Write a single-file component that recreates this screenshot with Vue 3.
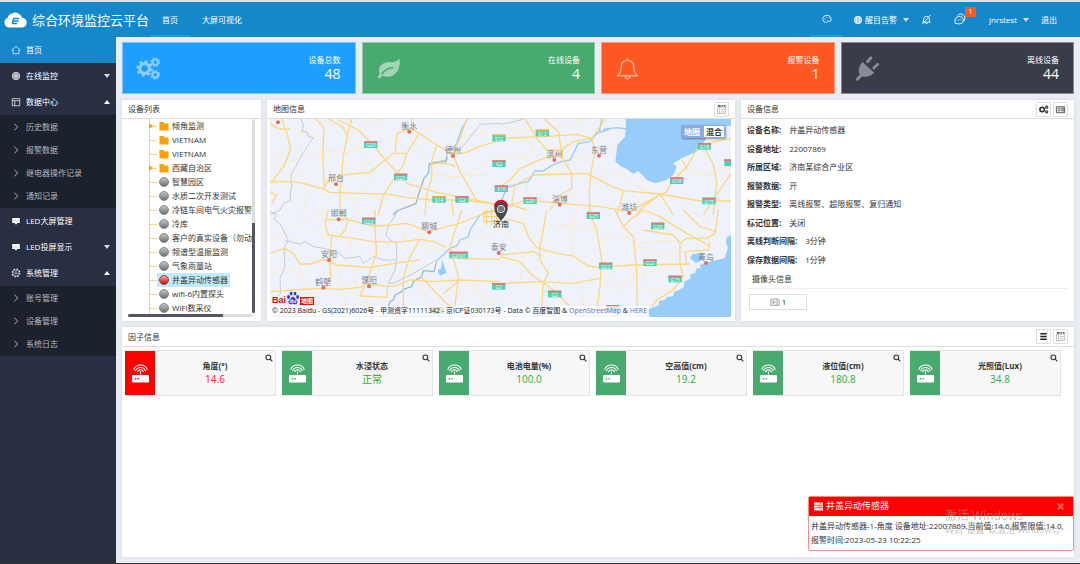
<script setup>
const menu = [
  { label: '首页', icon: 'home', active: true },
  { label: '在线监控', icon: 'globe', arrow: 'down' },
  { label: '数据中心', icon: 'table', arrow: 'up', children: ['历史数据', '报警数据', '继电器操作记录', '通知记录'] },
  { label: 'LED大屏管理', icon: 'screen' },
  { label: 'LED投屏显示', icon: 'screen', arrow: 'down' },
  { label: '系统管理', icon: 'gear', arrow: 'up', children: ['账号管理', '设备管理', '系统日志'] },
]

const stats = [
  { label: '设备总数', value: 48, tone: 'blue', icon: 'gears' },
  { label: '在线设备', value: 4, tone: 'green', icon: 'leaf' },
  { label: '报警设备', value: 1, tone: 'orange', icon: 'bell' },
  { label: '离线设备', value: 44, tone: 'dark', icon: 'plug' },
]

const tree = [
  { label: '倾角监测', folder: true, open: true },
  { label: 'VIETNAM', folder: true },
  { label: 'VIETNAM', folder: true },
  { label: '西藏自治区', folder: true, open: true },
  { label: '智慧园区' },
  { label: '水质二次开发测试' },
  { label: '冷链车间电气火灾报警' },
  { label: '冷库' },
  { label: '客户的真实设备（勿动）' },
  { label: '频谱型温振监测' },
  { label: '气象雨量站' },
  { label: '井盖异动传感器', selected: true },
  { label: 'wifi-6内置探头' },
  { label: 'WiFi数采仪' },
]

const info = [
  ['设备名称:', '井盖异动传感器'],
  ['设备地址:', '22007869'],
  ['所属区域:', '济南某综合产业区'],
  ['报警数据:', '开'],
  ['报警类型:', '离线报警、超限报警、复归通知'],
  ['标记位置:', '关闭'],
  ['离线判断间隔:', '3分钟'],
  ['保存数据间隔:', '1分钟'],
]

const factors = [
  { label: '角度(°)', value: '14.6', alarm: true },
  { label: '水浸状态', value: '正常' },
  { label: '电池电量(%)', value: '100.0' },
  { label: '空高值(cm)', value: '19.2' },
  { label: '液位值(cm)', value: '180.8' },
  { label: '光照值(Lux)', value: '34.8' },
]

const tiles = [
  {
    x: -30, y: -72,
    major: 'M66 72L85 130L92 165L70 215L40 255L30 262 M30 260L100 260L130 265L190 282L210 292L300 295L390 298L440 308L520 315L600 315L720 328 M168 72L192 98L188 180L193 280 M205 72L250 98L262 125L250 180L240 290L240 360 M275 72L262 120 M235 75L295 105L340 150L380 200L415 235L440 265L530 292L620 310L720 330 M455 72L455 100L530 150L580 178L620 172L650 158L720 135 M475 120L440 175L430 210L400 255L370 300L355 360 M190 280L205 255L245 240L330 232L400 175L437 175 M450 100L412 115L405 170 M620 72L600 130L580 180L600 230L640 300L655 325 M530 150L515 200L515 250L500 300L495 360 M515 207Q560 200 585 215 M30 290L50 300L35 325 M575 315L580 360 M30 85Q60 110 90 100',
    minor: 'M30 215L80 205L140 180L190 165L250 175L340 152 M140 300L130 360 M290 110L320 90L370 72 M300 295L330 250L300 160L260 125 M455 130L520 230L560 245L680 240 M600 130L680 110 M40 180L90 165 M120 110L190 130 M470 120L520 90L600 95 M620 240L690 190L720 180 M90 230L140 250L150 270 M400 255L460 300L470 360 M240 290L290 330L300 360 M505 240L600 245',
    border: 'M122 72L130 90L126 108L142 112L145 125L160 128L148 145L130 172L120 190L108 214L95 235L92 255L96 270L90 300L92 318L70 325L60 345L30 360 M720 85L660 88L640 115L600 165L575 155L560 165L562 195L540 198',
    river: 'M622 72L606 100L590 145L575 165',
    canal: 'M560 185L558 200L525 202L508 207L505 235L492 250L475 300L468 325L445 335L430 340L410 348L400 360',
  },
  {
    x: 690, y: -72,
    major: 'M133 72L175 110L188 190L215 235L215 280L180 300L150 345 M0 130L130 125L230 118L275 130 M315 72L290 110L275 130L220 140L190 160L187 180L130 190L60 220L30 255L0 275 M75 72L110 130L140 165L190 165 M275 130L285 165L272 240L268 290L270 360 M45 270L100 240L260 235L330 272L370 287L480 297L600 318L693 318 M693 130L605 148L590 165L560 215L515 260L500 290L470 305L430 335L410 355 M370 287L360 330L350 360 M612 155L640 210L650 260L640 360 M693 235L650 300L610 360 M480 297L520 360 M45 270L35 330L80 345 M0 340L80 315L180 325L300 335L390 350L470 305 M545 195L565 225',
    minor: 'M0 90L60 110L100 160L70 200 M60 110L190 95L260 72 M200 240L210 190L270 180 M285 165L340 155 M290 250L345 230L440 290 M550 230L640 240L693 210 M400 290L440 360 M530 300L560 360 M80 245L90 360 M210 290L260 340 M0 190L70 180L105 225',
    border: 'M0 88L35 82L72 72',
    river: 'M330 102L290 115L270 140L235 145L210 195L175 202L150 215L130 228L105 228L85 260L60 265L20 278L0 330 M305 72L298 112 M310 103L350 98L380 102L405 122',
    sea: 'M377 72L378 100L375 125L352 150L346 200L365 215L380 222L400 237L415 228L432 245L440 255L465 265L500 255L520 240L530 215L520 205L545 190L590 170L620 130L600 118L610 95L693 92L693 72Z',
  },
  {
    x: -30, y: 273,
    major: 'M205 0L195 40L205 75L280 85L340 95L430 95L480 88L520 95L560 112 M30 130L75 115L100 130L120 162L150 162L190 148L230 165L330 172L420 158L480 150 M215 75L210 150L212 200L195 235 M345 0L345 60L350 130L325 200L300 260 M240 0L265 30L255 60L240 78 M200 30L260 28L340 48L400 45L440 40L505 65L560 50L600 40L660 15L720 -5 M190 235L240 238L300 232L320 222L400 230L450 210L520 215L600 210L720 215 M480 88L450 140L430 200L430 300 M605 0L570 110L595 200L585 290 M480 195L520 240L570 290 M595 145L720 148 M30 245L100 240L190 235 M383 230L380 262L305 258 M550 250L600 210',
    minor: 'M30 190L100 175L140 220L170 290 M150 60L205 75 M100 50L200 0 M270 85L290 230L330 290 M430 95L440 40 M380 100L470 200L500 290 M620 100L720 60 M550 130L620 85 M660 150L640 215L690 290 M30 90L80 60 M120 162L130 220 M480 30L500 120L560 120 M230 165L260 290 M600 210L660 260L720 280',
    border: 'M30 5L48 12L42 28L60 40L75 70L85 90L72 115L75 170L60 205L62 250L52 260L60 280 M75 92L120 102L135 95L160 110L190 115L230 125L255 145L300 140L310 160L340 140L370 150L410 150L410 100L390 90L378 75L385 45L400 25L415 0 M410 150L405 180L385 220L400 220L460 190L530 150',
    river: 'M680 5L660 15L630 60L625 80L600 90L590 108L570 115L555 130L530 152',
    canal: 'M530 155L522 185L490 182L485 200L460 215L455 230L430 238L425 245L405 255L400 270L390 275L385 290',
    sea: 'M547 150L555 175L560 188L540 197L533 180L543 175Z',
  },
  {
    x: 690, y: 273,
    major: 'M15 25L70 40L85 80L110 112L170 130L220 138L265 168L300 172L400 165L570 162 M140 0L130 60L118 120L120 150L145 190L130 220L125 290 M0 135L100 125L125 140 M265 0L290 60L305 150L300 230L290 300 M345 0L370 50L400 80L410 180L412 290 M370 50L390 30L430 0L480 20L560 70L630 108 M0 140L60 155L90 190L160 240L210 290 M0 220L120 215L220 220L300 205 M550 0L600 50L650 65 M655 0L645 70L620 85L560 85L540 100L540 165L550 200L520 240L470 270L455 290 M555 125L625 120L630 95 M555 125L560 165 M540 100L520 75L430 60',
    minor: 'M0 50L40 90L70 140L60 215 M120 60L200 45L290 60 M230 0L210 60L220 138 M300 90L360 75L410 100L540 90 M305 150L350 240L410 190L510 180 M430 190L440 240L520 240 M410 110L470 130L540 125 M200 180L240 225L250 290 M480 20L510 80 M570 0L630 40',
    sea: 'M693 75L680 82L678 100L684 112L674 145L660 148L630 155L612 160L600 165L602 175L590 175L585 190L570 192L572 205L553 215L552 230L538 240L522 245L520 258L500 262L495 270L477 272L476 285L440 300L450 321L693 321Z M578 132L608 130L612 142L600 152L588 160L570 145Z',
  },
]

const shields = [
  [302, 77, 'G20'], [392, 174, 'G20'], [507, 241, 'S14', 1], [576, 241, 'G2'], [687, 57, 'S12', 1], [687, 134, 'G2'], [694, 209, 'S16'],
  [817, 42, 'S12', 1], [780, 245, 'G20'], [1303, 82, 'G18'], [1220, 185, 'G18'], [1317, 246, 'G15'], [1383, 131, ''],
  [296, 306, 'G22'], [566, 408, 'G2001'], [686, 502, 'G3'], [502, 574, ''], [970, 290, 'G25'], [1163, 321, 'G20'], [1007, 441, 'G22'],
  [1140, 431, 'G22'], [1215, 480, 'G15'], [854, 525, 'G2'], [1028, 568, ''],
]

const cities = [
  ['衡水', 418, 21], ['德州', 549, 94], ['邢台', 198, 179], ['邯郸', 206, 284], ['安阳', 177, 406], ['鹤壁', 160, 489], ['濮阳', 297, 485],
  ['聊城', 478, 323], ['滨州', 853, 106], ['东营', 987, 93], ['淄博', 869, 240], ['潍坊', 1078, 265], ['泰安', 686, 385], ['青岛', 1308, 415],
]
</script>

<template>
  <div class="app">
    <header class="topbar">
      <div class="brand">
        <svg class="cloud" viewBox="0 0 24 16"><path fill="#fff" d="M5.500 15.500A5 5 0 0 1 4.500 6A6 6 0 0 1 9 1.500A7 7 0 0 1 19 5.500A5 5 0 0 1 18.500 15.500Z" /><path d="M10 6.500h6M9.500 9h6M9 11.500h5M11.500 6q-3 3-1.500 6" fill="none" stroke="#1688c9" stroke-width="1.300" /></svg>
        <h1>综合环境监控云平台</h1>
      </div>
      <nav class="topnav">
        <a href="#" class="current">首页</a>
        <a href="#">大屏可视化</a>
      </nav>
      <div class="tools">
        <button class="tool theme" aria-label="主题"><svg viewBox="0 0 12 12" fill="none" stroke="#fff"><path d="M4 10Q1 9.500 1 6.500A5 4.800 0 0 1 11 6.500Q11 9 8.500 9Q6.500 8 6 9.200Q5.500 10.500 4 10Z" /><path d="M3 6h1M5 4h1M8 4.500h1" /></svg></button>
        <button class="tool notice"><svg viewBox="0 0 12 12" fill="none" stroke="#fff" stroke-width=".8"><circle cx="6" cy="6" r="4.500" fill="#ffffff66" /><ellipse cx="6" cy="6" rx="2" ry="4.500" /><path d="M1.500 6h9M2.500 3.500h7M2.500 8.500h7" /></svg><span>醒目告警</span><i class="caret down"></i></button>
        <button class="tool mute" aria-label="静音"><svg viewBox="0 0 12 12" fill="none" stroke="#fff"><path d="M2 9h8Q9 8 9 5Q8.500 2.500 6 2.500Q3.500 2.500 3 5Q3 8 2 9ZM5 10.500h2M10.500 1L1.500 11" /></svg></button>
        <button class="tool chat" aria-label="消息"><svg viewBox="0 0 14 14" fill="none" stroke="#fff"><path d="M5 2.500Q9-.5 12 3Q14 6 11.500 9" /><path d="M2 11L2.500 9.500A4.600 4 0 1 1 5 11.500Z" /><path d="M4 7.500h1M6 7.500h1M8 7.500h1" /></svg><b class="badge">1</b></button>
        <button class="tool"><span>jnrstest</span><i class="caret down"></i></button>
        <button class="tool exit">退出</button>
      </div>
    </header>

    <div class="body">
      <aside class="sidebar">
        <template v-for="item in menu" :key="item.label">
          <a href="#" class="item" :class="{ active: item.active }">
            <svg v-if="item.icon === 'home'" viewBox="0 0 12 12" fill="none" stroke="#d8eaf6"><path d="M1 6L6 1.500L11 6H9.500V10.500H2.500V6Z" /></svg>
            <svg v-else-if="item.icon === 'globe'" viewBox="0 0 12 12" fill="none" stroke="#ddd"><circle cx="6" cy="6" r="4.500" fill="#ffffff77" /><circle cx="6" cy="6" r="2" /><path d="M1.500 6h9M6 1.500v9" stroke-width=".7" /></svg>
            <svg v-else-if="item.icon === 'table'" viewBox="0 0 12 12" fill="none" stroke="#ddd"><path d="M1.500 2h9v8.500h-9ZM1.500 4.500h9M4.500 4.500v6" /></svg>
            <svg v-else-if="item.icon === 'screen'" viewBox="0 0 12 12"><path fill="#fff" d="M1.500 2.500h9v6h-3L6 10.500L4.500 8.500h-3Z" /><path d="M3 7L5 5L6.500 6.500L9 4" stroke="#8e95a5" stroke-width=".7" fill="none" /></svg>
            <svg v-else viewBox="0 0 12 12" fill="none" stroke="#ddd"><circle cx="6" cy="6" r="4.600" stroke-width="1.400" stroke-dasharray="2 1.600" /><circle cx="6" cy="6" r="3.800" stroke-width=".8" /><circle cx="6" cy="6" r="1.500" stroke-width=".8" /></svg>
            <span>{{ item.label }}</span>
            <i v-if="item.arrow" class="caret" :class="item.arrow"></i>
          </a>
          <div v-if="item.children" class="submenu">
            <a v-for="sub in item.children" :key="sub" href="#">
              <svg viewBox="0 0 12 12" fill="none" stroke="#aeb2ba" stroke-width="1.200"><path d="M4 2L8 6L4 10" /></svg>{{ sub }}
            </a>
          </div>
        </template>
      </aside>

      <main class="content">
        <section class="stats">
          <div v-for="s in stats" :key="s.label" class="stat" :class="s.tone">
            <svg v-if="s.icon === 'gears'" viewBox="0 0 28 28" fill="none" stroke="#8fceff"><circle cx="10" cy="14" r="5" stroke-width="3.500" /><circle cx="10" cy="14" r="7.200" stroke-width="2.600" stroke-dasharray="2.800 2.850" /><circle cx="21" cy="7.500" r="2.800" stroke-width="2" /><circle cx="21" cy="7.500" r="4.200" stroke-width="1.700" stroke-dasharray="1.650 1.650" /><circle cx="21" cy="20.500" r="2.800" stroke-width="2" /><circle cx="21" cy="20.500" r="4.200" stroke-width="1.700" stroke-dasharray="1.650 1.650" /></svg>
            <svg v-else-if="s.icon === 'leaf'" viewBox="0 0 28 28"><path fill="#a3d4b6" d="M25.500 4Q27 16 19 21Q13 24 7.500 21.500L5 24.500L2.500 23Q4 21 5 20Q2 12 9 8.500Q13 6.500 18 7.500Q23 7 25.500 4Z" /><path d="M7 20Q11 14 19 13" stroke="#49aa6f" stroke-width="1.500" fill="none" /></svg>
            <svg v-else-if="s.icon === 'bell'" viewBox="0 0 28 28" fill="none" stroke="#ffac91" stroke-width="1.500"><path d="M4 21.500Q7.500 18 7.500 12Q8 6 14 5.500Q20 6 20.500 12Q20.500 18 24 21.500ZM14 3v2.500M11.500 22Q12 25 14 25Q16 25 16.500 22" /></svg>
            <svg v-else viewBox="0 0 28 28" fill="none" stroke="#8a8c95" stroke-width="3" stroke-linecap="round"><path d="M3.500 25L9 19.500M14 7L17.500 3M20.500 13.500L24.500 9.500" /><path fill="#8a8c95" stroke-width="1" d="M9 8L20.500 18.500Q17 22 13 22Q9 23 6.500 20Q4.500 17 6 13Q6.500 10 9 8Z" /></svg>
            <div class="figure"><span>{{ s.label }}</span><strong>{{ s.value }}</strong></div>
          </div>
        </section>

        <section class="middle">
          <article class="panel">
            <h2>设备列表</h2>
            <div class="treebox">
              <ul class="tree">
                <li v-for="(n, i) in tree" :key="i" :class="{ open: n.open }">
                  <span class="node" :class="{ selected: n.selected }">
                    <svg v-if="n.folder" viewBox="0 0 10 10"><path fill="#ffa200" d="M0.500 1h4l1 1.500h4v7h-9Z" /></svg>
                    <i v-else class="ball" :class="{ red: n.selected }"></i>
                    {{ n.label }}
                  </span>
                </li>
              </ul>
              <i class="vbar"></i><i class="hbar"></i>
            </div>
          </article>

          <article class="panel">
            <h2>地图信息<button class="mini" aria-label="切换"><svg viewBox="0 0 12 12" fill="none"><path stroke="#aaa" d="M1.500 3.500h9v7h-9ZM4 4v6M5.500 6h4M5.500 8.500h4" stroke-width=".8" /><path stroke="#222" stroke-width="1.500" d="M2 2h3M6 2h1.500M8.500 2h2" /></svg></button></h2>
            <div class="map">
              <svg class="land" viewBox="0 0 1383 594" preserveAspectRatio="xMidYMid slice">
                <g v-for="(t, i) in tiles" :key="i" :transform="`translate(${t.x} ${t.y})`" fill="none" stroke-linejoin="round">
                  <path v-if="t.sea" :d="t.sea" fill="#99cdf9" />
                  <path :d="t.minor" stroke="#fdecc9" stroke-width="3" />
                  <path v-if="t.border" :d="t.border" stroke="#bfc3cb" stroke-width="2.500" />
                  <path v-if="t.river" :d="t.river" stroke="#9accf8" stroke-width="4" />
                  <path v-if="t.canal" :d="t.canal" stroke="#98b9d3" stroke-width="4" />
                  <path :d="t.major" stroke="#fdd77e" stroke-width="4" />
                </g>
                <path d="M642 278h50v30h-50zM650 270v48M665 270v48M680 270v48M640 293h56" fill="none" stroke="#fccf63" stroke-width="3" />
                <g v-for="(s, i) in shields" :key="'s' + i">
                  <rect :x="s[0] - (s[2].length > 3 ? 28 : 20)" :y="s[1] - 10" :width="s[2].length > 3 ? 56 : 40" height="20" fill="#51cfae" />
                  <rect :x="s[0] - (s[2].length > 3 ? 28 : 20)" :y="s[1] - 10" :width="s[2].length > 3 ? 56 : 40" height="5" :fill="s[3] ? '#d9b638' : '#e87373'" />
                  <text v-if="s[2]" :x="s[0]" :y="s[1] + 8" class="road">{{ s[2] }}</text>
                </g>
                <g v-for="c in cities" :key="c[0]">
                  <circle :cx="c[1]" :cy="c[2] + 17" r="6" fill="#df6e69" />
                  <text :x="c[1]" :y="c[2] + 8" class="city">{{ c[0] }}</text>
                </g>
                <circle cx="24" cy="10" r="6" fill="#df6e69" />
                <text x="693" y="323" class="city capital">济南</text>
                <path d="M693 306Q673 284 673 268A20 20 0 1 1 713 268Q713 284 693 306Z" fill="#45494e" />
                <path d="M675 263A18 18 0 0 1 711 263" fill="none" stroke="#e60012" stroke-width="6" />
                <circle cx="693" cy="270" r="11" fill="#777" stroke="#ddd" stroke-width="3" />
              </svg>
              <div class="maptype"><button class="on">地图</button><button>混合</button></div>
              <div class="baidu"><span>Bai</span><svg viewBox="0 0 14 14" fill="#2932e1" stroke="#fff" stroke-width=".5"><ellipse cx="2.500" cy="6" rx="1.800" ry="2.200" /><ellipse cx="5.200" cy="2.600" rx="1.600" ry="2.200" /><ellipse cx="9" cy="2.600" rx="1.600" ry="2.200" /><ellipse cx="11.600" cy="6" rx="1.700" ry="2.200" /><path d="M7 5.500Q9 6 10 8.500Q13 10.500 11 13Q9 14 7 13Q4 14 2.500 12.500Q1.500 10 4 8.500Q5 5.500 7 5.500Z" /><text x="7" y="12" text-anchor="middle" fill="#fff" stroke="none" font-size="5" font-weight="700">du</text></svg><em>地图</em></div>
              <p class="credit">© 2023 Baidu - GS(2021)6026号 - 甲测资字11111342 - 京ICP证030173号 - Data © 百度智图 &amp; <a href="#">OpenStreetMap</a> &amp; <a href="#">HERE</a></p>
            </div>
          </article>

          <article class="panel">
            <h2>设备信息
              <button class="mini" aria-label="设置"><svg viewBox="0 0 12 12" fill="none" stroke="#333"><circle cx="4.500" cy="6" r="2.400" stroke-width="1.800" /><circle cx="9.500" cy="3.500" r="1.200" stroke-width="1.200" /><circle cx="9.500" cy="8.500" r="1.200" stroke-width="1.200" /></svg></button>
              <button class="mini" aria-label="卡片"><svg viewBox="0 0 12 12" fill="#ddd" stroke="#555"><path d="M1.500 3h9v6.500h-9Z" /><path d="M3 5h3M3 7h3M7.500 4.500h2v3h-2Z" stroke-width=".8" /></svg></button>
            </h2>
            <dl class="info">
              <div v-for="row in info" :key="row[0]"><dt>{{ row[0] }}</dt><dd>{{ row[1] }}</dd></div>
            </dl>
            <h3>摄像头信息</h3>
            <button class="camera"><svg viewBox="0 0 12 12" fill="none" stroke="#777" stroke-width=".8"><path d="M1 2.500h7.500v7.500H1ZM8.500 2.500h1.500L11 4v6H8.500M3.500 4.500L6.500 6.200L3.500 8Z" /></svg>1</button>
          </article>
        </section>

        <section class="panel factors">
          <h2>因子信息
            <button class="mini" aria-label="列表"><svg viewBox="0 0 12 12"><path d="M2.500 3h7M2.500 6h7M2.500 9h7" stroke="#222" stroke-width="1.500" /></svg></button>
            <button class="mini" aria-label="切换"><svg viewBox="0 0 12 12" fill="none"><path stroke="#aaa" d="M1.500 3.500h9v7h-9ZM4 4v6M5.500 6h4M5.500 8.500h4" stroke-width=".8" /><path stroke="#222" stroke-width="1.500" d="M2 2h3M6 2h1.500M8.500 2h2" /></svg></button>
          </h2>
          <div class="cards">
            <div v-for="f in factors" :key="f.label" class="card" :class="{ alarm: f.alarm }">
              <div class="sensor"><svg viewBox="0 0 20 20"><rect x="1" y="11.500" width="18" height="8" rx="1.200" fill="#fff" /><path d="M10 11V7.500M6.800 8.500A3.300 3.300 0 0 1 13.200 8.500M4.700 7.500A5.600 5.600 0 0 1 15.300 7.500M2.800 6A7.700 7.700 0 0 1 17.200 6" fill="none" stroke="#fff" stroke-width="1.100" /><path class="led" d="M4 15.500h1.500M6.800 15.500h1.500" stroke-width="1.500" /></svg></div>
              <div class="reading"><b>{{ f.label }}</b><span>{{ f.value }}</span></div>
              <button class="search" aria-label="查询"><svg viewBox="0 0 10 10" fill="none" stroke="#333" stroke-width="1.400"><circle cx="4.200" cy="4.200" r="3" /><path d="M6.500 6.500L9.200 9.200" /></svg></button>
            </div>
          </div>
        </section>
      </main>
    </div>

    <div class="toast" role="alert">
      <div class="toast-head"><svg viewBox="0 0 10 10"><path d="M0 1.800h10M0 5h10M0 8.200h10" stroke="#fff" stroke-width="2.400" /><path d="M6 1.800h3M4 5h5M6 8.200h3" stroke="#f77" stroke-width=".8" /></svg><span>井盖异动传感器</span><button aria-label="关闭"><svg viewBox="0 0 10 10"><path d="M2 2L8 8M8 2L2 8" stroke="#ff6060" stroke-width="2.200" /></svg></button></div>
      <p>井盖异动传感器-1-角度 设备地址:22007869,当前值:14.6,报警限值:14.0,报警时间:2023-05-23 10:22:25</p>
    </div>
    <div class="watermark"><strong>激活 Windows</strong><span>转到"设置"以激活 Windows。</span></div>
  </div>
</template>

<style>
body { background: #ebedf5; overflow: hidden; }
</style>

<style scoped>
* { box-sizing: border-box; margin: 0; padding: 0; }
.app { min-height: 100vh; display: flex; flex-direction: column; font: 8px/14px "Open Sans", "Noto Sans CJK SC", sans-serif; color: #333; border-bottom: 1px solid #30323c; }
button { font: inherit; color: inherit; border: 0; background: none; cursor: pointer; }
a { color: inherit; text-decoration: none; }
svg { display: block; flex: none; }
.topbar { height: 37px; flex: none; display: flex; background: #1688c9; color: #fff; border-top: 2px solid #d9e4ea; }
.brand { display: flex; align-items: center; gap: 5px; padding-left: 3px; width: 150px; flex: none; }
.cloud { width: 24px; height: 16px; }
h1 { font-size: 13px; font-weight: 400; line-height: 20px; white-space: nowrap; }
.topnav { display: flex; }
.topnav a { padding: 0 12px; line-height: 35px; }
.topnav .current { border-bottom: 2px solid #11a3ea; }
.tools { margin-left: auto; display: flex; padding-right: 11px; }
.tool { display: flex; align-items: center; gap: 2px; padding: 0 10px; }
.tool svg { width: 10px; height: 10px; }
.theme { padding: 0 11px; border-bottom: 2px solid #11a3ea; }
.notice { padding-right: 7px; }
.mute { padding: 0 11px 0 5px; }
.mute svg { width: 11px; height: 11px; }
.chat { position: relative; padding: 0 13px 0 10px; }
.chat svg { width: 13px; height: 13px; }
.badge { position: absolute; left: 22px; top: 5px; width: 11px; line-height: 10px; background: #ff5722; font-weight: 400; text-align: center; font-size: 7px; }
.exit { padding: 0 12px 0 2px; }
.caret { border: 3px solid transparent; width: 0; height: 0; }
.caret.down { border-top: 4px solid #d5dde5; border-bottom: 0; margin-left: 4px; }
.caret.up { border-bottom: 4px solid #fff; border-top: 0; }
.body { flex: 1; display: flex; }
.sidebar { width: 116px; flex: none; background: #282f43; color: #fff; }
.item { display: flex; align-items: center; height: 26px; padding: 0 6px 0 11px; gap: 5px; }
.item.active { background: #1688c9; }
.item svg, .submenu svg { width: 10px; height: 10px; }
.item .caret { margin-left: auto; }
.submenu { background: #1c212e; color: #b4b7be; padding-bottom: 1px; }
.submenu a { display: flex; align-items: center; gap: 5px; height: 23px; padding-left: 11px; }
.content { flex: 1; min-width: 0; display: flex; flex-direction: column; gap: 6px; padding: 5px 6px 6px; background: #ebedf5; }
.stats { display: grid; grid-template-columns: repeat(4, 1fr); gap: 6px; }
.stat { height: 52px; display: flex; align-items: center; justify-content: space-between; padding: 0 14px 0 12px; color: #fff; border: 1px solid #ffffff66; }
.stat svg { width: 27px; height: 27px; }
.figure { display: flex; flex-direction: column; text-align: right; padding-bottom: 2px; }
.figure span { line-height: 12px; }
.figure strong { font-size: 14px; line-height: 15px; font-weight: 400; }
.blue { background: #1e9fff; }
.green { background: #49aa6f; }
.orange { background: #ff5722; }
.dark { background: #393d49; }
.middle { display: grid; grid-template-columns: 139fr 468fr 333fr; gap: 6px; height: 221px; }
.panel { background: #fff; box-shadow: 0 0 4px #00000018; min-width: 0; display: flex; flex-direction: column; }
h2 { display: flex; align-items: center; gap: 2px; height: 19px; flex: none; padding: 0 6px; border-bottom: 1px solid #ddd; font-size: 8px; font-weight: 400; }
.mini { width: 15px; height: 15px; border: 1px solid #ddd; border-radius: 1px; display: flex; align-items: center; justify-content: center; }
.mini svg { width: 11px; height: 11px; }
h2 .mini:first-of-type { margin-left: auto; }
.treebox { position: relative; flex: 1; overflow: hidden; margin-right: 6px; }
.tree { list-style: none; padding-left: 27px; margin-right: 2px; overflow: hidden; }
.tree li { height: 14px; position: relative; padding-left: 7px; white-space: nowrap; border-left: 1px solid #ffd48a; }
.tree li::before { content: ""; position: absolute; left: 0; top: 7px; width: 7px; height: 1px; background: #ffd48a; }
.tree li.open::after { content: ""; position: absolute; left: -1px; top: 4px; border: 3px solid transparent; border-left: 4px solid #ffa200; border-right: 0; }
.node { display: inline-flex; align-items: center; gap: 3px; height: 14px; padding: 0 2px; vertical-align: top; }
.node svg { width: 10px; height: 10px; }
.ball { width: 10px; height: 10px; border-radius: 50%; background: linear-gradient(#c3c5c5, #6d7070); border: 1px solid #858787; }
.ball.red { background: linear-gradient(#f6a3a3, #c01515); border-color: #a33; }
.selected { background: #beebff; }
.vbar { position: absolute; right: 0; top: 0; width: 3px; height: 194px; border-radius: 2px; background: linear-gradient(#dcdcdc 104px, #545762 104px); }
.hbar { position: absolute; left: 6px; right: 3px; top: 195px; height: 3px; border-radius: 2px; background: linear-gradient(90deg, #545762 77%, #dcdcdc 77%); }
.map { position: relative; flex: 1; margin: 0 4px 4px 3px; overflow: hidden; background: #eff2fa; min-height: 0; }
.land { width: 100%; height: 100%; }
.road { font-size: 15px; fill: #fff; text-anchor: middle; }
.city { font-size: 24px; fill: #80838a; text-anchor: middle; }
.capital { fill: #222; }
.maptype { position: absolute; top: 6px; right: 6px; display: flex; box-shadow: 1px 1px 2px #0006; background: #fff; }
.maptype button { width: 22px; line-height: 11px; font-weight: 700; border: 1px solid #8ea8e0; }
.maptype .on { background: #8ea8e0; color: #fff; }
.baidu { position: absolute; left: 2px; bottom: 12px; display: flex; align-items: flex-end; }
.baidu span { color: #e10602; font: 700 9px/10px "Liberation Sans", sans-serif; }
.baidu svg { width: 14px; height: 14px; }
.baidu em { background: #e10602; color: #fff; font: 700 6px/8px "Noto Sans CJK SC", sans-serif; padding: 0 1px; }
.credit { position: absolute; left: 0; bottom: 1px; padding: 0 2px; font-size: 7px; line-height: 10px; background: #ffffffb3; white-space: nowrap; color: #222; }
.credit a { color: #6a6ad6; }
.info { padding: 2px 6px 1px; }
.info div { display: flex; gap: 8px; align-items: center; margin-bottom: 1px; }
.info div:nth-child(even) { height: 17px; }
.info div:nth-child(odd) { height: 18px; }
.info dt { font-weight: 700; }
h3 { font-size: 8px; font-weight: 400; margin: 0 6px; padding: 2px 5px; border-bottom: 1px solid #eee; }
.camera { display: flex; align-items: center; justify-content: center; gap: 2px; width: 58px; height: 16px; margin: 5px 0 0 8px; border: 1px solid #ddd; }
.camera svg { width: 10px; height: 10px; }
.factors { flex: 1; }
.factors h2 { height: 20px; }
.cards { display: grid; grid-template-columns: repeat(6, 1fr); gap: 6px; padding: 3px 13px 0 3px; }
.card { position: relative; height: 46px; display: flex; background: #f7f7f7; border: 1px solid #e4e4e4; border-left: 0; color: #27b148; }
.sensor { width: 30px; display: flex; align-items: center; justify-content: center; background: #49aa6f; }
.sensor svg { width: 19px; height: 19px; }
.led { stroke: #49aa6f; }
.alarm .sensor { background: #f00; }
.alarm .led { stroke: #f00; }
.alarm { color: #f22; }
.reading { flex: 1; display: flex; flex-direction: column; justify-content: center; text-align: center; }
.reading b { color: #333; line-height: 12px; }
.reading span { font-size: 10px; line-height: 15px; }
.search { position: absolute; right: 2px; top: 3px; }
.search svg { width: 8px; height: 8px; }
.toast { position: fixed; right: 6px; bottom: 13px; width: 266px; border: 1px solid #ff8c8c; border-radius: 2px; background: #fff; }
.toast-head { display: flex; align-items: center; gap: 3px; height: 19px; padding: 0 8px 1px 5px; background: #f00; color: #fff; font-size: 9px; }
.toast-head svg { width: 9px; height: 9px; }
.toast-head button { margin-left: auto; }
.toast p { padding: 3px 2px; line-height: 14px; word-break: break-all; }
.watermark { position: fixed; right: 16px; bottom: 27px; display: flex; flex-direction: column; width: 119px; color: #9999; white-space: nowrap; pointer-events: none; }
.watermark strong { font-size: 12px; line-height: 15px; font-weight: 400; }
.watermark span { font-size: 9px; }
</style>
